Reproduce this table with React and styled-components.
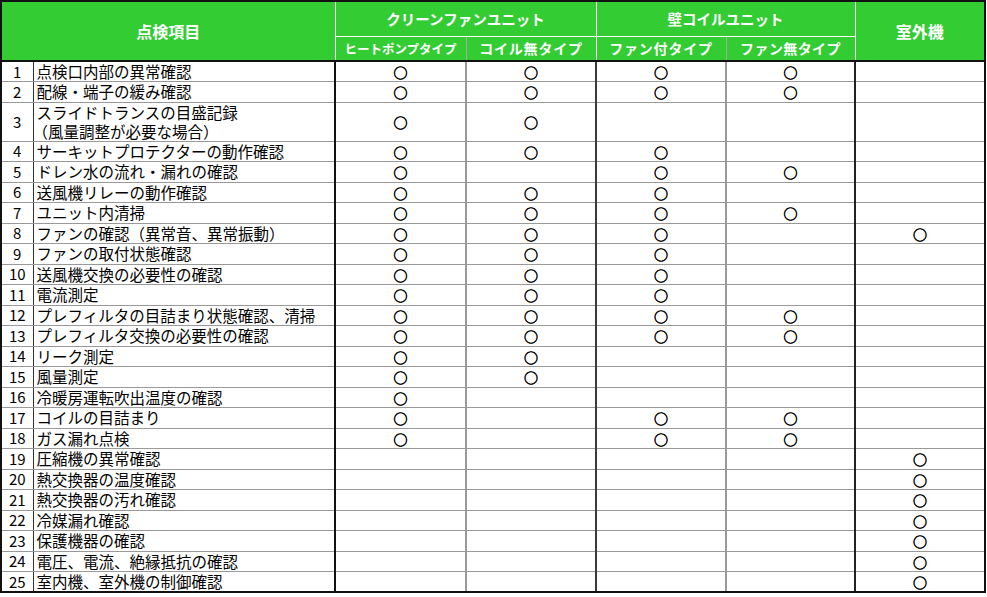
import styled, { createGlobalStyle } from 'styled-components'

const GlobalStyle = createGlobalStyle`
  body {
    margin: 0;
    background: #fff;
  }
`

// HP: ヒートポンプ, CL: コイル無, FW: ファン付, FN: ファン無, OUT: 室外機
const items = [
  { no: 1, label: ['点検口内部の異常確認'], marks: [1, 1, 1, 1, 0] },
  { no: 2, label: ['配線・端子の緩み確認'], marks: [1, 1, 1, 1, 0] },
  { no: 3, label: ['スライドトランスの目盛記録', '（風量調整が必要な場合）'], marks: [1, 1, 0, 0, 0] },
  { no: 4, label: ['サーキットプロテクターの動作確認'], marks: [1, 1, 1, 0, 0] },
  { no: 5, label: ['ドレン水の流れ・漏れの確認'], marks: [1, 0, 1, 1, 0] },
  { no: 6, label: ['送風機リレーの動作確認'], marks: [1, 1, 1, 0, 0] },
  { no: 7, label: ['ユニット内清掃'], marks: [1, 1, 1, 1, 0] },
  { no: 8, label: ['ファンの確認（異常音、異常振動）'], marks: [1, 1, 1, 0, 1] },
  { no: 9, label: ['ファンの取付状態確認'], marks: [1, 1, 1, 0, 0] },
  { no: 10, label: ['送風機交換の必要性の確認'], marks: [1, 1, 1, 0, 0] },
  { no: 11, label: ['電流測定'], marks: [1, 1, 1, 0, 0] },
  { no: 12, label: ['プレフィルタの目詰まり状態確認、清掃'], marks: [1, 1, 1, 1, 0] },
  { no: 13, label: ['プレフィルタ交換の必要性の確認'], marks: [1, 1, 1, 1, 0] },
  { no: 14, label: ['リーク測定'], marks: [1, 1, 0, 0, 0] },
  { no: 15, label: ['風量測定'], marks: [1, 1, 0, 0, 0] },
  { no: 16, label: ['冷暖房運転吹出温度の確認'], marks: [1, 0, 0, 0, 0] },
  { no: 17, label: ['コイルの目詰まり'], marks: [1, 0, 1, 1, 0] },
  { no: 18, label: ['ガス漏れ点検'], marks: [1, 0, 1, 1, 0] },
  { no: 19, label: ['圧縮機の異常確認'], marks: [0, 0, 0, 0, 1] },
  { no: 20, label: ['熱交換器の温度確認'], marks: [0, 0, 0, 0, 1] },
  { no: 21, label: ['熱交換器の汚れ確認'], marks: [0, 0, 0, 0, 1] },
  { no: 22, label: ['冷媒漏れ確認'], marks: [0, 0, 0, 0, 1] },
  { no: 23, label: ['保護機器の確認'], marks: [0, 0, 0, 0, 1] },
  { no: 24, label: ['電圧、電流、絶縁抵抗の確認'], marks: [0, 0, 0, 0, 1] },
  { no: 25, label: ['室内機、室外機の制御確認'], marks: [0, 0, 0, 0, 1] },
]

const colWidths = [32, 302, 131, 130, 130, 129, 130]

// right border of each mark column
const markBorders = ['2px solid #9a9a9a', '2px solid #3a3a3a', '2px solid #9a9a9a', '2px solid #222', '2px solid #111']

const Sheet = styled.table`
  width: 986px;
  table-layout: fixed;
  border-collapse: collapse;
  border: 2px solid #111;
  font-family: 'Noto Sans CJK JP', 'Noto Sans', sans-serif;
  color: #000;
`

const Col = styled.col`
  width: ${p => p.$w}px;
`

const HeadRow = styled.tr`
  height: ${p => p.$h}px;
`

const HeadCell = styled.th`
  background: #33cc33;
  color: #fff;
  font-weight: bold;
  font-size: ${p => p.$size || 14}px;
  letter-spacing: ${p => p.$spacing || 0}px;
  text-align: center;
  vertical-align: middle;
  padding: 0;
  white-space: nowrap;
  overflow: hidden;
  border: 1px solid #fff;
  border-right: ${p => p.$right || '1px solid #fff'};
  border-bottom: ${p => (p.$last ? '2px solid #111' : '1px solid #fff')};
`

const BodyRow = styled.tr`
  height: ${p => (p.$double ? 39 : 20.5)}px;
`

const NoCell = styled.td`
  padding: 0;
  text-align: center;
  vertical-align: middle;
  font-size: 15px;
  line-height: 18px;
  border-right: 1px solid #333;
  border-bottom: ${p => (p.$last ? '2px solid #111' : '1px solid #999')};
`

const LabelCell = styled.td`
  padding: 0 0 0 3px;
  vertical-align: middle;
  font-size: 15.5px;
  line-height: 19px;
  white-space: nowrap;
  overflow: hidden;
  border-right: 2px solid #111;
  border-bottom: ${p => (p.$last ? '2px solid #111' : '1px solid #999')};
`

const LabelLine = styled.div`
  height: 19px;
  margin-left: ${p => (p.$paren ? -4 : 0)}px;
`

const MarkCell = styled.td`
  padding: 0;
  text-align: center;
  vertical-align: middle;
  line-height: 18px;
  border-right: ${p => p.$right};
  border-bottom: ${p => (p.$last ? '2px solid #111' : '1px solid #999')};
`

const Mark = styled.span`
  font-family: 'Noto Sans CJK JP', sans-serif;
  font-size: 14px;
  -webkit-text-stroke: 0.6px #000;
`

const App = () => {
  return (
    <>
      <GlobalStyle />
      <Sheet>
        <colgroup>
          {colWidths.map((w, i) => (
            <Col key={i} $w={w} />
          ))}
        </colgroup>
        <thead>
          <HeadRow $h={35}>
            <HeadCell colSpan={2} rowSpan={2} $size={16} $last>点検項目</HeadCell>
            <HeadCell colSpan={2} $size={14.5}>クリーンファンユニット</HeadCell>
            <HeadCell colSpan={2} $size={14.5}>壁コイルユニット</HeadCell>
            <HeadCell rowSpan={2} $size={16} $last>室外機</HeadCell>
          </HeadRow>
          <HeadRow $h={25}>
            <HeadCell $size={12.5} $right='1px solid #a8a8a8' $last>ヒートポンプタイプ</HeadCell>
            <HeadCell $size={14} $spacing={0.8} $last>コイル無タイプ</HeadCell>
            <HeadCell $size={14} $spacing={0.8} $right='1px solid #a8a8a8' $last>ファン付タイプ</HeadCell>
            <HeadCell $size={14} $spacing={0.4} $last>ファン無タイプ</HeadCell>
          </HeadRow>
        </thead>
        <tbody>
          {items.map((item, r) => {
            const last = r === items.length - 1
            return (
              <BodyRow key={item.no} $double={item.label.length > 1}>
                <NoCell $last={last}>{item.no}</NoCell>
                <LabelCell $last={last}>
                  {item.label.map((line, i) => (
                    <LabelLine key={i} $paren={line.startsWith('（')}>{line}</LabelLine>
                  ))}
                </LabelCell>
                {item.marks.map((m, c) => (
                  <MarkCell key={c} $right={markBorders[c]} $last={last}>
                    {m ? <Mark>○</Mark> : null}
                  </MarkCell>
                ))}
              </BodyRow>
            )
          })}
        </tbody>
      </Sheet>
    </>
  )
}

export default App
